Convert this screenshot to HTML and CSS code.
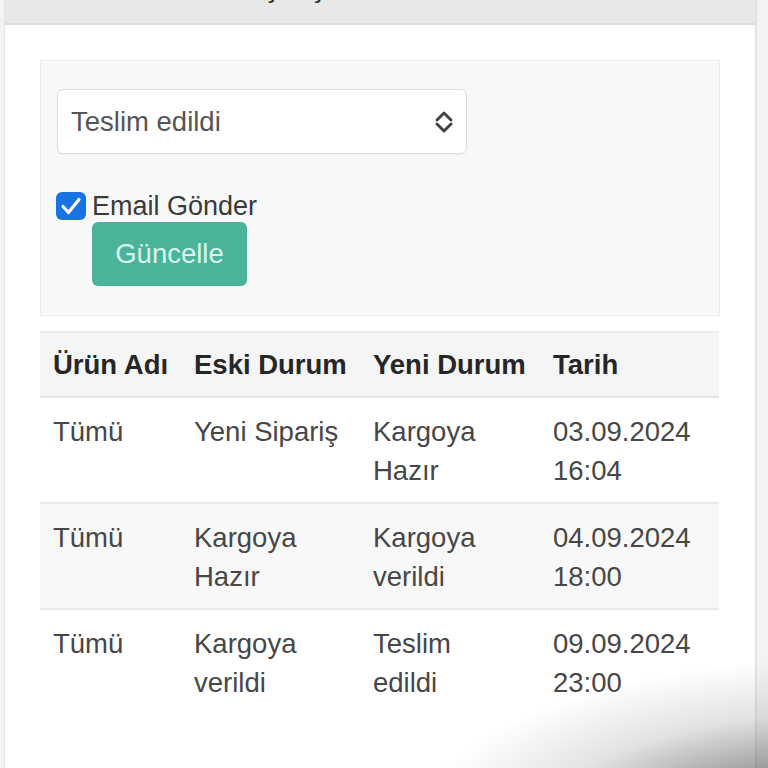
FILE: index.html
```html
<!DOCTYPE html>
<html lang="tr">
<head>
<meta charset="utf-8">
<title>Durum Geçmişi</title>
<link rel="stylesheet" href="styles.css">
</head>
<body>
<div class="card">
  <div class="card-header"><div class="title">Durum Geçmişi</div></div>
  <div class="card-body">
    <div class="panel">
      <div class="select">
        <span class="select-text">Teslim edildi</span>
        <svg class="chev" width="20" height="24" viewBox="0 0 20 24"><path d="M3 10 L10 3 L17 10 M3 14 L10 21 L17 14" fill="none" stroke="#454545" stroke-width="3" stroke-linecap="round" stroke-linejoin="round"/></svg>
      </div>
      <div class="check-row">
        <span class="check"><svg width="30" height="28" viewBox="0 0 30 28"><path d="M7 14.5 L12.5 20.5 L23 7.5" fill="none" stroke="#fff" stroke-width="3.2" stroke-linecap="round" stroke-linejoin="round"/></svg></span>
        <span class="check-label">Email Gönder</span>
      </div>
      <button class="btn">Güncelle</button>
    </div>
    <table class="tbl">
      <colgroup><col class="c1"><col class="c2"><col class="c3"><col class="c4"></colgroup>
      <thead>
        <tr><th>Ürün Adı</th><th>Eski Durum</th><th>Yeni Durum</th><th>Tarih</th></tr>
      </thead>
      <tbody>
        <tr><td>Tümü</td><td>Yeni Sipariş</td><td class="narrow">Kargoya Hazır</td><td>03.09.2024 16:04</td></tr>
        <tr class="alt"><td>Tümü</td><td class="narrow">Kargoya Hazır</td><td class="narrow">Kargoya verildi</td><td>04.09.2024 18:00</td></tr>
        <tr><td>Tümü</td><td class="narrow">Kargoya verildi</td><td class="narrow">Teslim edildi</td><td>09.09.2024 23:00</td></tr>
      </tbody>
    </table>
  </div>
</div>
<div class="shade"></div>
</body>
</html>
```
FILE: styles.css
```css
html, body {
  margin: 0;
  padding: 0;
}
body {
  background: #f3f3f3;
  font-family: "Liberation Sans", Arial, sans-serif;
  width: 768px;
  height: 768px;
  overflow: hidden;
  position: relative;
}
.card {
  margin-left: 4px;
  width: 750px;
  height: 768px;
  background: #fff;
  border-left: 1px solid #e4e4e4;
  border-right: 2px solid #e2e2e2;
}
.card-header {
  height: 23px;
  background: #e8e8e8;
  border-bottom: 2px solid #dcdcdc;
  overflow: hidden;
}
.title {
  margin-top: -27px;
  padding-left: 128px;
  font-size: 27px;
  line-height: 30px;
  font-weight: bold;
  color: #333;
}
.card-body {
  padding: 35px 35px 0 35px;
}
.panel {
  background: #f7f8f8;
  border: 1px solid #eaeded;
  padding: 28px 16px 29px 16px;
}
.select {
  height: 63px;
  width: 383px;
  background: #fff;
  border: 1px solid #dedede;
  border-radius: 6px;
  display: flex;
  align-items: center;
  justify-content: space-between;
  padding: 0 12px 0 13px;
  box-shadow: 0 1px 1px rgba(0,0,0,0.04);
}
.select-text {
  font-size: 27.5px;
  color: #555;
}
.chev {
  display: block;
}
.check-row {
  margin-top: 36px;
  height: 32px;
  display: flex;
  align-items: center;
  gap: 6px;
  margin-left: -1px;
}
.check {
  width: 30px;
  height: 28px;
  border-radius: 6px;
  background: #1a73e3;
  display: block;
}
.check svg {
  display: block;
}
.check-label {
  font-size: 27px;
  line-height: 32px;
  color: #3a3a3a;
}
.btn {
  display: block;
  margin-left: 35px;
  width: 155px;
  height: 64px;
  border: none;
  border-radius: 6px;
  background: #4cb39b;
  color: #d6f7ec;
  font-family: "Liberation Sans", Arial, sans-serif;
  font-size: 27.5px;
  padding: 0;
}
.tbl {
  margin-top: 15px;
  width: 679px;
  border-collapse: collapse;
  table-layout: fixed;
}
.c1 { width: 141px; }
.c2 { width: 179px; }
.c3 { width: 180px; }
.c4 { width: 179px; }
.tbl th {
  text-align: left;
  font-weight: bold;
  font-size: 27.5px;
  line-height: 39px;
  color: #262626;
  padding: 12px 0 12px 13px;
  background: #f5f5f5;
  border-top: 2px solid #ececec;
  border-bottom: 2px solid #e3e3e3;
  white-space: nowrap;
}
.tbl td {
  vertical-align: top;
  font-size: 27.5px;
  line-height: 39px;
  color: #474747;
  padding: 14px 6px 12px 13px;
  border-top: 2px solid #e8e8e8;
}
.tbl td.narrow {
  padding-right: 24px;
}
.tbl tbody tr:first-child td {
  border-top: none;
}
.tbl tr.alt td {
  background: #f8f8f8;
}
.shade {
  position: absolute;
  left: 0;
  top: 0;
  width: 768px;
  height: 768px;
  pointer-events: none;
  background: radial-gradient(ellipse 420px 180px at 830px 840px, rgba(60,60,60,0.92) 0%, rgba(95,95,95,0.7) 35%, rgba(160,160,160,0.3) 70%, rgba(200,200,200,0) 100%);
}
```
